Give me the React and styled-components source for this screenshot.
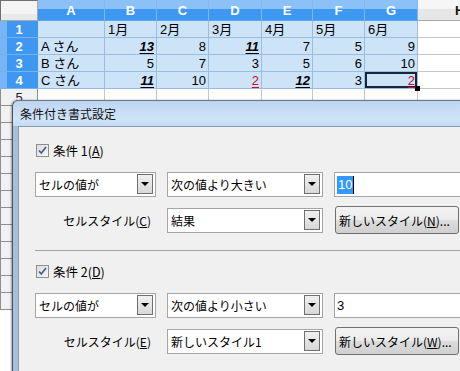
import React from "react";
import styled, { createGlobalStyle, css } from "styled-components";

const GlobalStyle = createGlobalStyle`
  html, body {
    margin: 0;
    padding: 0;
    width: 460px;
    height: 371px;
    overflow: hidden;
    background: #ffffff;
  }
  body {
    font-family: "Liberation Sans", "Noto Sans CJK JP", sans-serif;
  }
`;

const COLS = [38, 67, 52, 52, 53, 51, 52, 53, 80];
const LETTERS = ["A", "B", "C", "D", "E", "F", "G", "H"];

const data = [
  ["", "1月", "2月", "3月", "4月", "5月", "6月"],
  ["A さん", { v: 13, s: "result" }, 8, { v: 11, s: "result" }, 7, 5, 9],
  ["B さん", 5, 7, 3, 5, 6, 10],
  ["C さん", { v: 11, s: "result" }, 10, { v: 2, s: "red" }, { v: 12, s: "result" }, 3, { v: 2, s: "red" }],
];

const Page = styled.div`
  position: relative;
  width: 460px;
  height: 371px;
  overflow: hidden;
`;

const Sheet = styled.div`
  display: grid;
  grid-template-columns: ${COLS.map((c) => c + "px").join(" ")};
  grid-template-rows: 21px;
  grid-auto-rows: 17px;
  font-size: 13px;
  color: #000;
`;

const Corner = styled.div`
  background: linear-gradient(#f4f4f4 0 13px, #e9e9e9 13px);
  border-top: 1px solid #6f6f6f;
  border-left: 1px solid #6f6f6f;
  border-right: 1px solid #a8a8a8;
  border-bottom: 1px solid #a8a8a8;
  box-sizing: border-box;
`;

const ColHead = styled.div`
  box-sizing: border-box;
  display: flex;
  align-items: center;
  justify-content: center;
  font-weight: bold;
  font-size: 13px;
  padding-top: 1px;
  ${({ $sel }) =>
    $sel
      ? css`
          background: linear-gradient(#8cc1f7 0 9px, #3e97f0 9px);
          color: #fff;
          border-right: 1px solid #82b8ee;
          border-bottom: 1px solid #5aa6f0;
        `
      : css`
          background: linear-gradient(#f6f6f6 0 9px, #e6e6e6 9px);
          color: #111;
          border-bottom: 1px solid #a8a8a8;
          justify-content: flex-start;
          padding-left: 37px;
        `}
`;

const RowHead = styled.div`
  box-sizing: border-box;
  display: flex;
  align-items: center;
  justify-content: center;
  font-size: 13px;
  font-weight: bold;
  ${({ $sel }) =>
    $sel
      ? css`
          background: linear-gradient(90deg, #78b5f4 0 7px, #3e97f0 7px);
          color: #fff;
          border-bottom: 1px solid #78b2ec;
        `
      : css`
          background: #f1f1f1;
          color: #222;
          font-weight: normal;
          border-bottom: 1px solid #8e8e8e;
          border-right: 1px solid #8e8e8e;
          border-left: 1px solid #8e8e8e;
        `}
`;

const Cell = styled.div`
  position: relative;
  box-sizing: border-box;
  display: flex;
  align-items: center;
  white-space: nowrap;
  overflow: visible;
  line-height: 16px;
  padding: 1px 2px 0 3px;
  justify-content: ${({ $num }) => ($num ? "flex-end" : "flex-start")};
  background: ${({ $sel }) => ($sel ? "#cce3f8" : "#ffffff")};
  border-right: 1px solid ${({ $sel }) => ($sel ? "#9dbde0" : "#c6c6c6")};
  border-bottom: 1px solid ${({ $sel }) => ($sel ? "#9dbde0" : "#c6c6c6")};
  ${({ $active }) =>
    $active &&
    css`
      box-shadow: inset 0 0 0 2px #15263a;
    `}
`;

const Handle = styled.span`
  position: absolute;
  right: -3px;
  bottom: -3px;
  width: 5px;
  height: 5px;
  background: #000;
  z-index: 2;
`;

const Val = styled.span`
  ${({ $s }) =>
    $s === "result" &&
    css`
      font-weight: bold;
      font-style: italic;
      text-decoration: underline;
      text-underline-offset: 2px;
    `}
  ${({ $s }) =>
    $s === "red" &&
    css`
      color: #d2002c;
      text-decoration: underline;
      text-underline-offset: 2px;
    `}
`;

/* ---------- dialog ---------- */

const Dialog = styled.div`
  position: absolute;
  left: 12px;
  top: 100px;
  width: 470px;
  height: 300px;
  border-left: 1px solid #4d5560;
  border-top: 1px solid #6a7888;
  border-top-left-radius: 6px;
  background: linear-gradient(90deg, #a3c0de, #c9ddf2 60%, #b2cbe6);
  box-shadow: -1px 0 2px rgba(0, 0, 0, 0.35);
  font-family: "Noto Sans CJK JP", "Liberation Sans", sans-serif;
  font-size: 12px;
  color: #000;
`;

const TitleBar = styled.div`
  height: 25px;
  display: flex;
  align-items: center;
  padding-left: 7px;
  border-top-left-radius: 6px;
  background: linear-gradient(
    180deg,
    #bcd5ef 0%,
    #c9def5 40%,
    #d0e4f8 75%,
    #c2daf3 100%
  );
  font-size: 12px;
  color: #111;
`;

const Body = styled.div`
  margin-left: 5px;
  height: 100%;
  background: #f0f0f0;
  border-left: 1px solid #8b9aad;
  border-top: 1px solid #8b9aad;
  padding: 3px 0 0 16px;
  box-sizing: border-box;
`;

const Section = styled.div`
  padding: 13px 0 16px;
  border-bottom: 1px solid ${({ $last }) => ($last ? "transparent" : "#a0a0a0")};
  display: flex;
  flex-direction: column;
`;

const CheckLine = styled.label`
  display: flex;
  align-items: center;
  gap: 4px;
  height: 14px;
  margin-left: 1px;
  margin-bottom: 15px;
  font-size: 12.5px;
`;

const CheckBox = styled.span`
  width: 11px;
  height: 11px;
  border: 1px solid #8e8f8f;
  background: linear-gradient(135deg, #dcdcdc, #f7f7f7);
  display: flex;
  align-items: center;
  justify-content: center;
`;

const ControlRow = styled.div`
  display: grid;
  grid-template-columns: 121px 156px 1fr;
  column-gap: 11px;
  align-items: center;
  height: ${({ $tall }) => ($tall ? "28px" : "25px")};
  margin-bottom: ${({ $gap }) => ($gap ? "9px" : "0")};
`;

const Select = styled.div`
  position: relative;
  height: 25px;
  box-sizing: border-box;
  border: 1px solid #a5a5a5;
  background: #fff;
  display: flex;
  align-items: center;
  padding-left: 3px;
  white-space: nowrap;
`;

const Arrow = styled.span`
  position: absolute;
  right: 2px;
  top: 1px;
  bottom: 2px;
  width: 16px;
  box-sizing: border-box;
  border: 1px solid #6f6f6f;
  background: linear-gradient(#f0f0f0, #d8d8d8);
  display: flex;
  align-items: center;
  justify-content: center;

  &::after {
    content: "";
    border-left: 4px solid transparent;
    border-right: 4px solid transparent;
    border-top: 4px solid #000;
  }
`;

const Label = styled.div`
  text-align: right;
  padding-right: 5px;
  white-space: nowrap;
`;

const Input = styled.div`
  height: 25px;
  box-sizing: border-box;
  border: 1px solid #a5a5a5;
  border-right: none;
  background: #fff;
  display: flex;
  align-items: center;
  padding-left: 2px;
  font-family: "Liberation Sans", sans-serif;
  font-size: 13px;
`;

const Selected = styled.span`
  background: #3399ff;
  color: #fff;
  padding: 1px 1px;
  line-height: 16px;
  border-right: 1px solid #000;
`;

const Button = styled.button`
  height: 28px;
  width: 124px;
  box-sizing: border-box;
  border: 1px solid #707070;
  border-radius: 3px;
  background: linear-gradient(#f3f3f3 0%, #ebebeb 48%, #dddddd 52%, #cfcfcf 100%);
  font-family: "Noto Sans CJK JP", "Liberation Sans", sans-serif;
  font-size: 12px;
  color: #000;
  padding: 0 0 0 3px;
  text-align: left;
  white-space: nowrap;
  margin-left: 1px;
`;

const Check = () => (
  <CheckBox>
    <svg width="9" height="9" viewBox="0 0 9 9">
      <path d="M1 4.5 L3.3 7 L8 1" fill="none" stroke="#4a5a96" strokeWidth="1.7" />
    </svg>
  </CheckBox>
);

const ConditionSection = ({ num, keyChar, op, value, styleName, styleKey, btnKey, last }) => (
  <Section $last={last}>
    <CheckLine>
      <Check />
      <span>
        条件 {num}(<u>{keyChar}</u>)
      </span>
    </CheckLine>
    <ControlRow $gap>
      <Select>
        セルの値が
        <Arrow />
      </Select>
      <Select>
        {op}
        <Arrow />
      </Select>
      <Input>{value}</Input>
    </ControlRow>
    <ControlRow $tall>
      <Label>
        セルスタイル(<u>{styleKey}</u>)
      </Label>
      <Select>
        {styleName}
        <Arrow />
      </Select>
      <Button>
        新しいスタイル(<u>{btnKey}</u>)...
      </Button>
    </ControlRow>
  </Section>
);

export default function App() {
  // rows below the visible table; their numbers are hidden by the dialog, except row 5
  const extraRows = [];
  for (let r = 5; r <= 17; r++) {
    extraRows.push(
      <React.Fragment key={r}>
        <RowHead>{r === 5 ? r : null}</RowHead>
        {LETTERS.map((l) => (
          <Cell key={l} />
        ))}
      </React.Fragment>
    );
  }

  return (
    <Page>
      <GlobalStyle />
      <Sheet>
        <Corner />
        {LETTERS.map((l) => (
          <ColHead key={l} $sel={l !== "H"}>
            {l}
          </ColHead>
        ))}
        {data.map((row, ri) => (
          <React.Fragment key={ri}>
            <RowHead $sel>{ri + 1}</RowHead>
            {row.map((c, ci) => {
              const isObj = c !== null && typeof c === "object";
              const v = isObj ? c.v : c;
              const num = typeof v === "number";
              const active = ri === 3 && ci === 6;
              return (
                <Cell key={ci} $sel $num={num} $active={active}>
                  <Val $s={isObj ? c.s : undefined}>{v}</Val>
                  {active && <Handle />}
                </Cell>
              );
            })}
            <Cell />
          </React.Fragment>
        ))}
        {extraRows}
      </Sheet>

      <Dialog>
        <TitleBar>条件付き書式設定</TitleBar>
        <Body>
          <ConditionSection
            num={1}
            keyChar="A"
            op="次の値より大きい"
            value={<Selected>10</Selected>}
            styleName="結果"
            styleKey="C"
            btnKey="N"
          />
          <ConditionSection
            num={2}
            keyChar="D"
            op="次の値より小さい"
            value="3"
            styleName="新しいスタイル1"
            styleKey="E"
            btnKey="W"
            last
          />
        </Body>
      </Dialog>
    </Page>
  );
}
